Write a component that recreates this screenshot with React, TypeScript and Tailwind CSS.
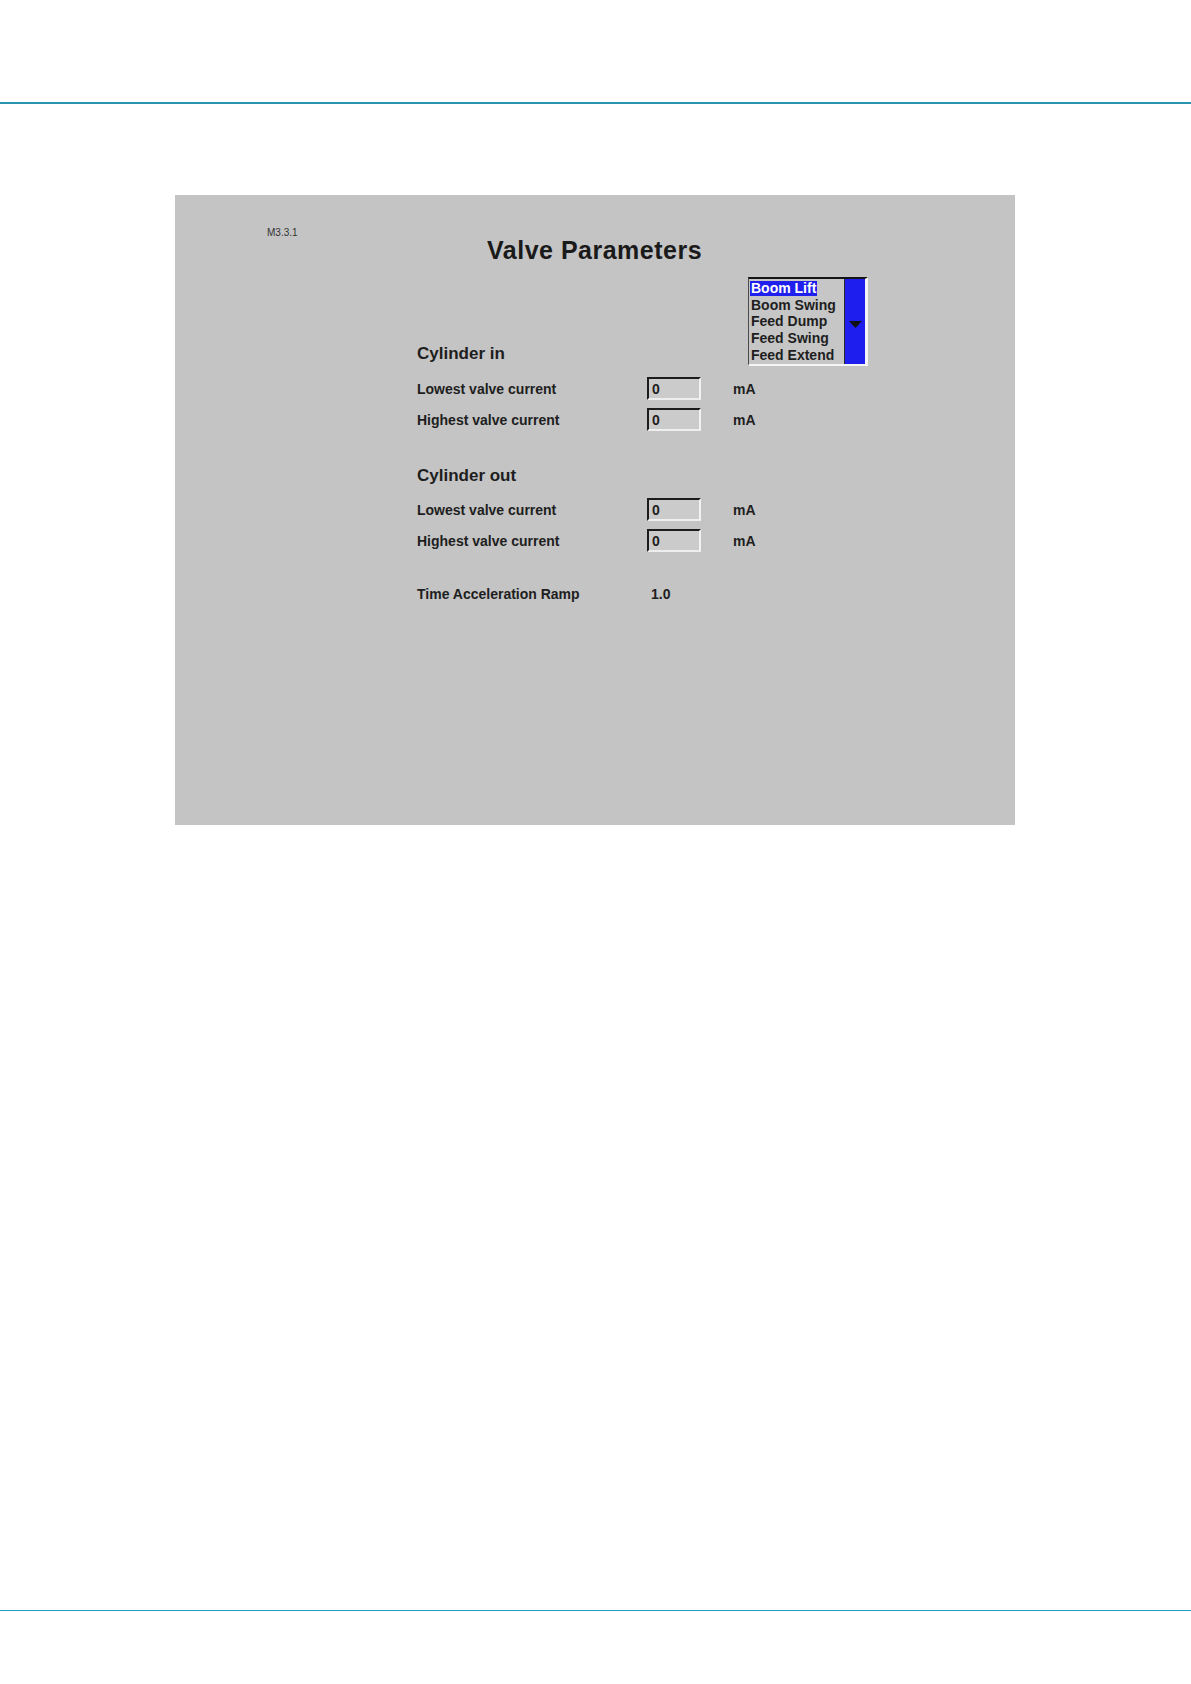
import React from "react";

const font = { fontFamily: '"Liberation Sans", Arial, sans-serif' };

function Field({ value }: { value: string }) {
  return (
    <div className="w-[54px] h-[23px] border-t-2 border-l-2 border-t-[#1c1c1c] border-l-[#1c1c1c] border-r-2 border-b-2 border-r-[#f2f2f2] border-b-[#eeeeee] bg-[#cbcbcb] flex items-center pl-[3px] text-[14px] leading-none font-bold text-[#1e1e1e]">
      {value}
    </div>
  );
}

function Row({ label, value }: { label: string; value: string }) {
  return (
    <div className="flex items-center h-[31px]">
      <div className="w-[230px] text-[14px] leading-none font-bold text-[#1e1e1e]">{label}</div>
      <div className="w-[86px]">
        <Field value={value} />
      </div>
      <div className="text-[14px] leading-none font-bold text-[#1e1e1e]">mA</div>
    </div>
  );
}

function ListBox() {
  const items = ["Boom Lift", "Boom Swing", "Feed Dump", "Feed Swing", "Feed Extend"];
  return (
    <div className="w-[120px] h-[89px] flex border-t-2 border-t-[#141414] border-l border-l-[#4a4a4a] border-b-2 border-b-[#f4f4f4] border-r-[3px] border-r-[#f4f4f4] bg-[#c6c6c6]">
      <div className="flex-1 flex flex-col pt-px pl-px">
        {items.map((it, i) => (
          <div key={it} className="h-[17px] flex items-center">
            <span
              className={
                i === 0
                  ? "bg-[#2020ee] text-white px-px text-[14px] leading-[15px] font-bold"
                  : "text-[#1e1e1e] px-px text-[14px] leading-[15px] font-bold"
              }
            >
              {it}
            </span>
          </div>
        ))}
      </div>
      <div className="w-[21px] border-l border-l-[#2a2a2a] bg-[#1e1eee] flex items-center justify-center">
        <svg width="13" height="7" viewBox="0 0 13 7" className="mt-[6px]">
          <polygon points="0,0 13,0 6.5,7" fill="#111" />
        </svg>
      </div>
    </div>
  );
}

export default function App() {
  return (
    <div className="w-[1191px] h-[1684px] bg-white flex flex-col" style={font}>
      <div className="h-[102px]" />
      <div className="h-[2px] bg-[#2a93ad]" />
      <div className="ml-[175px] mt-[91px] w-[840px] h-[630px] bg-[#c4c4c4] flex flex-col pt-[32px]">
        <div className="ml-[92px] text-[10px] leading-[11px] text-[#333]">M3.3.1</div>
        <div className="ml-[312px] text-[25px] leading-[24px] tracking-[0.5px] font-bold text-[#1a1a1a]">Valve Parameters</div>
        <div className="ml-[242px] mt-[15px] flex flex-col">
          <div className="flex items-end h-[89px]">
            <div className="w-[331px] text-[17px] leading-[20px] font-bold text-[#1e1e1e] mb-[2px]">Cylinder in</div>
            <ListBox />
          </div>
          <div className="mt-[7px]">
            <Row label="Lowest valve current" value="0" />
            <Row label="Highest valve current" value="0" />
          </div>
          <div className="mt-[31px] h-[20px] text-[17px] leading-[20px] font-bold text-[#1e1e1e]">Cylinder out</div>
          <div className="mt-[8px]">
            <Row label="Lowest valve current" value="0" />
            <Row label="Highest valve current" value="0" />
          </div>
          <div className="mt-[22px] flex items-center h-[31px]">
            <div className="w-[234px] text-[14px] leading-none font-bold text-[#1e1e1e]">Time Acceleration Ramp</div>
            <div className="text-[14px] leading-none font-bold text-[#1e1e1e]">1.0</div>
          </div>
        </div>
      </div>
      <div className="mt-[785px] h-px bg-[#1f9bcc]" />
    </div>
  );
}
